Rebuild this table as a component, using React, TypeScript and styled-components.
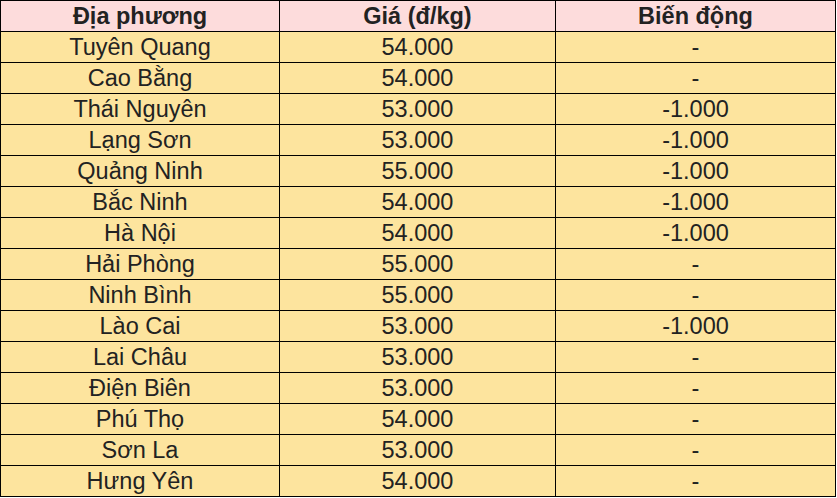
import * as React from 'react';
import styled, { createGlobalStyle } from 'styled-components';

interface Row {
  place: string;
  price: string;
  change: string;
}

const rows: Row[] = [
  { place: 'Tuyên Quang', price: '54.000', change: '-' },
  { place: 'Cao Bằng', price: '54.000', change: '-' },
  { place: 'Thái Nguyên', price: '53.000', change: '-1.000' },
  { place: 'Lạng Sơn', price: '53.000', change: '-1.000' },
  { place: 'Quảng Ninh', price: '55.000', change: '-1.000' },
  { place: 'Bắc Ninh', price: '54.000', change: '-1.000' },
  { place: 'Hà Nội', price: '54.000', change: '-1.000' },
  { place: 'Hải Phòng', price: '55.000', change: '-' },
  { place: 'Ninh Bình', price: '55.000', change: '-' },
  { place: 'Lào Cai', price: '53.000', change: '-1.000' },
  { place: 'Lai Châu', price: '53.000', change: '-' },
  { place: 'Điện Biên', price: '53.000', change: '-' },
  { place: 'Phú Thọ', price: '54.000', change: '-' },
  { place: 'Sơn La', price: '53.000', change: '-' },
  { place: 'Hưng Yên', price: '54.000', change: '-' },
];

const App: React.FC = () => (
  <>
    <GlobalStyle />
    <Table>
      <colgroup>
        <col style={{ width: 279 }} />
        <col style={{ width: 276 }} />
        <col style={{ width: 280 }} />
      </colgroup>
      <thead>
        <tr>
          <Head>Địa phương</Head>
          <Head>Giá (đ/kg)</Head>
          <Head>Biến động</Head>
        </tr>
      </thead>
      <tbody>
        {rows.map((r) => (
          <tr key={r.place}>
            <Cell>{r.place}</Cell>
            <Cell>{r.price}</Cell>
            <Cell>{r.change}</Cell>
          </tr>
        ))}
      </tbody>
    </Table>
  </>
);

const GlobalStyle = createGlobalStyle`
  body {
    margin: 0;
    background: #ffffff;
    font-family: "Liberation Sans", Arial, sans-serif;
  }
`;

const Table = styled.table`
  border-collapse: collapse;
  table-layout: fixed;
  width: 836px;
  color: #222222;
  font-size: 23.5px;
`;

const Head = styled.th`
  height: 30px;
  padding: 0;
  border: 1px solid #000000;
  background: #fddcdc;
  font-weight: bold;
  text-align: center;
  line-height: 30px;
`;

const Cell = styled.td`
  height: 30px;
  padding: 0;
  border: 1px solid #000000;
  background: #fde49e;
  text-align: center;
  line-height: 30px;
`;

export default App;
